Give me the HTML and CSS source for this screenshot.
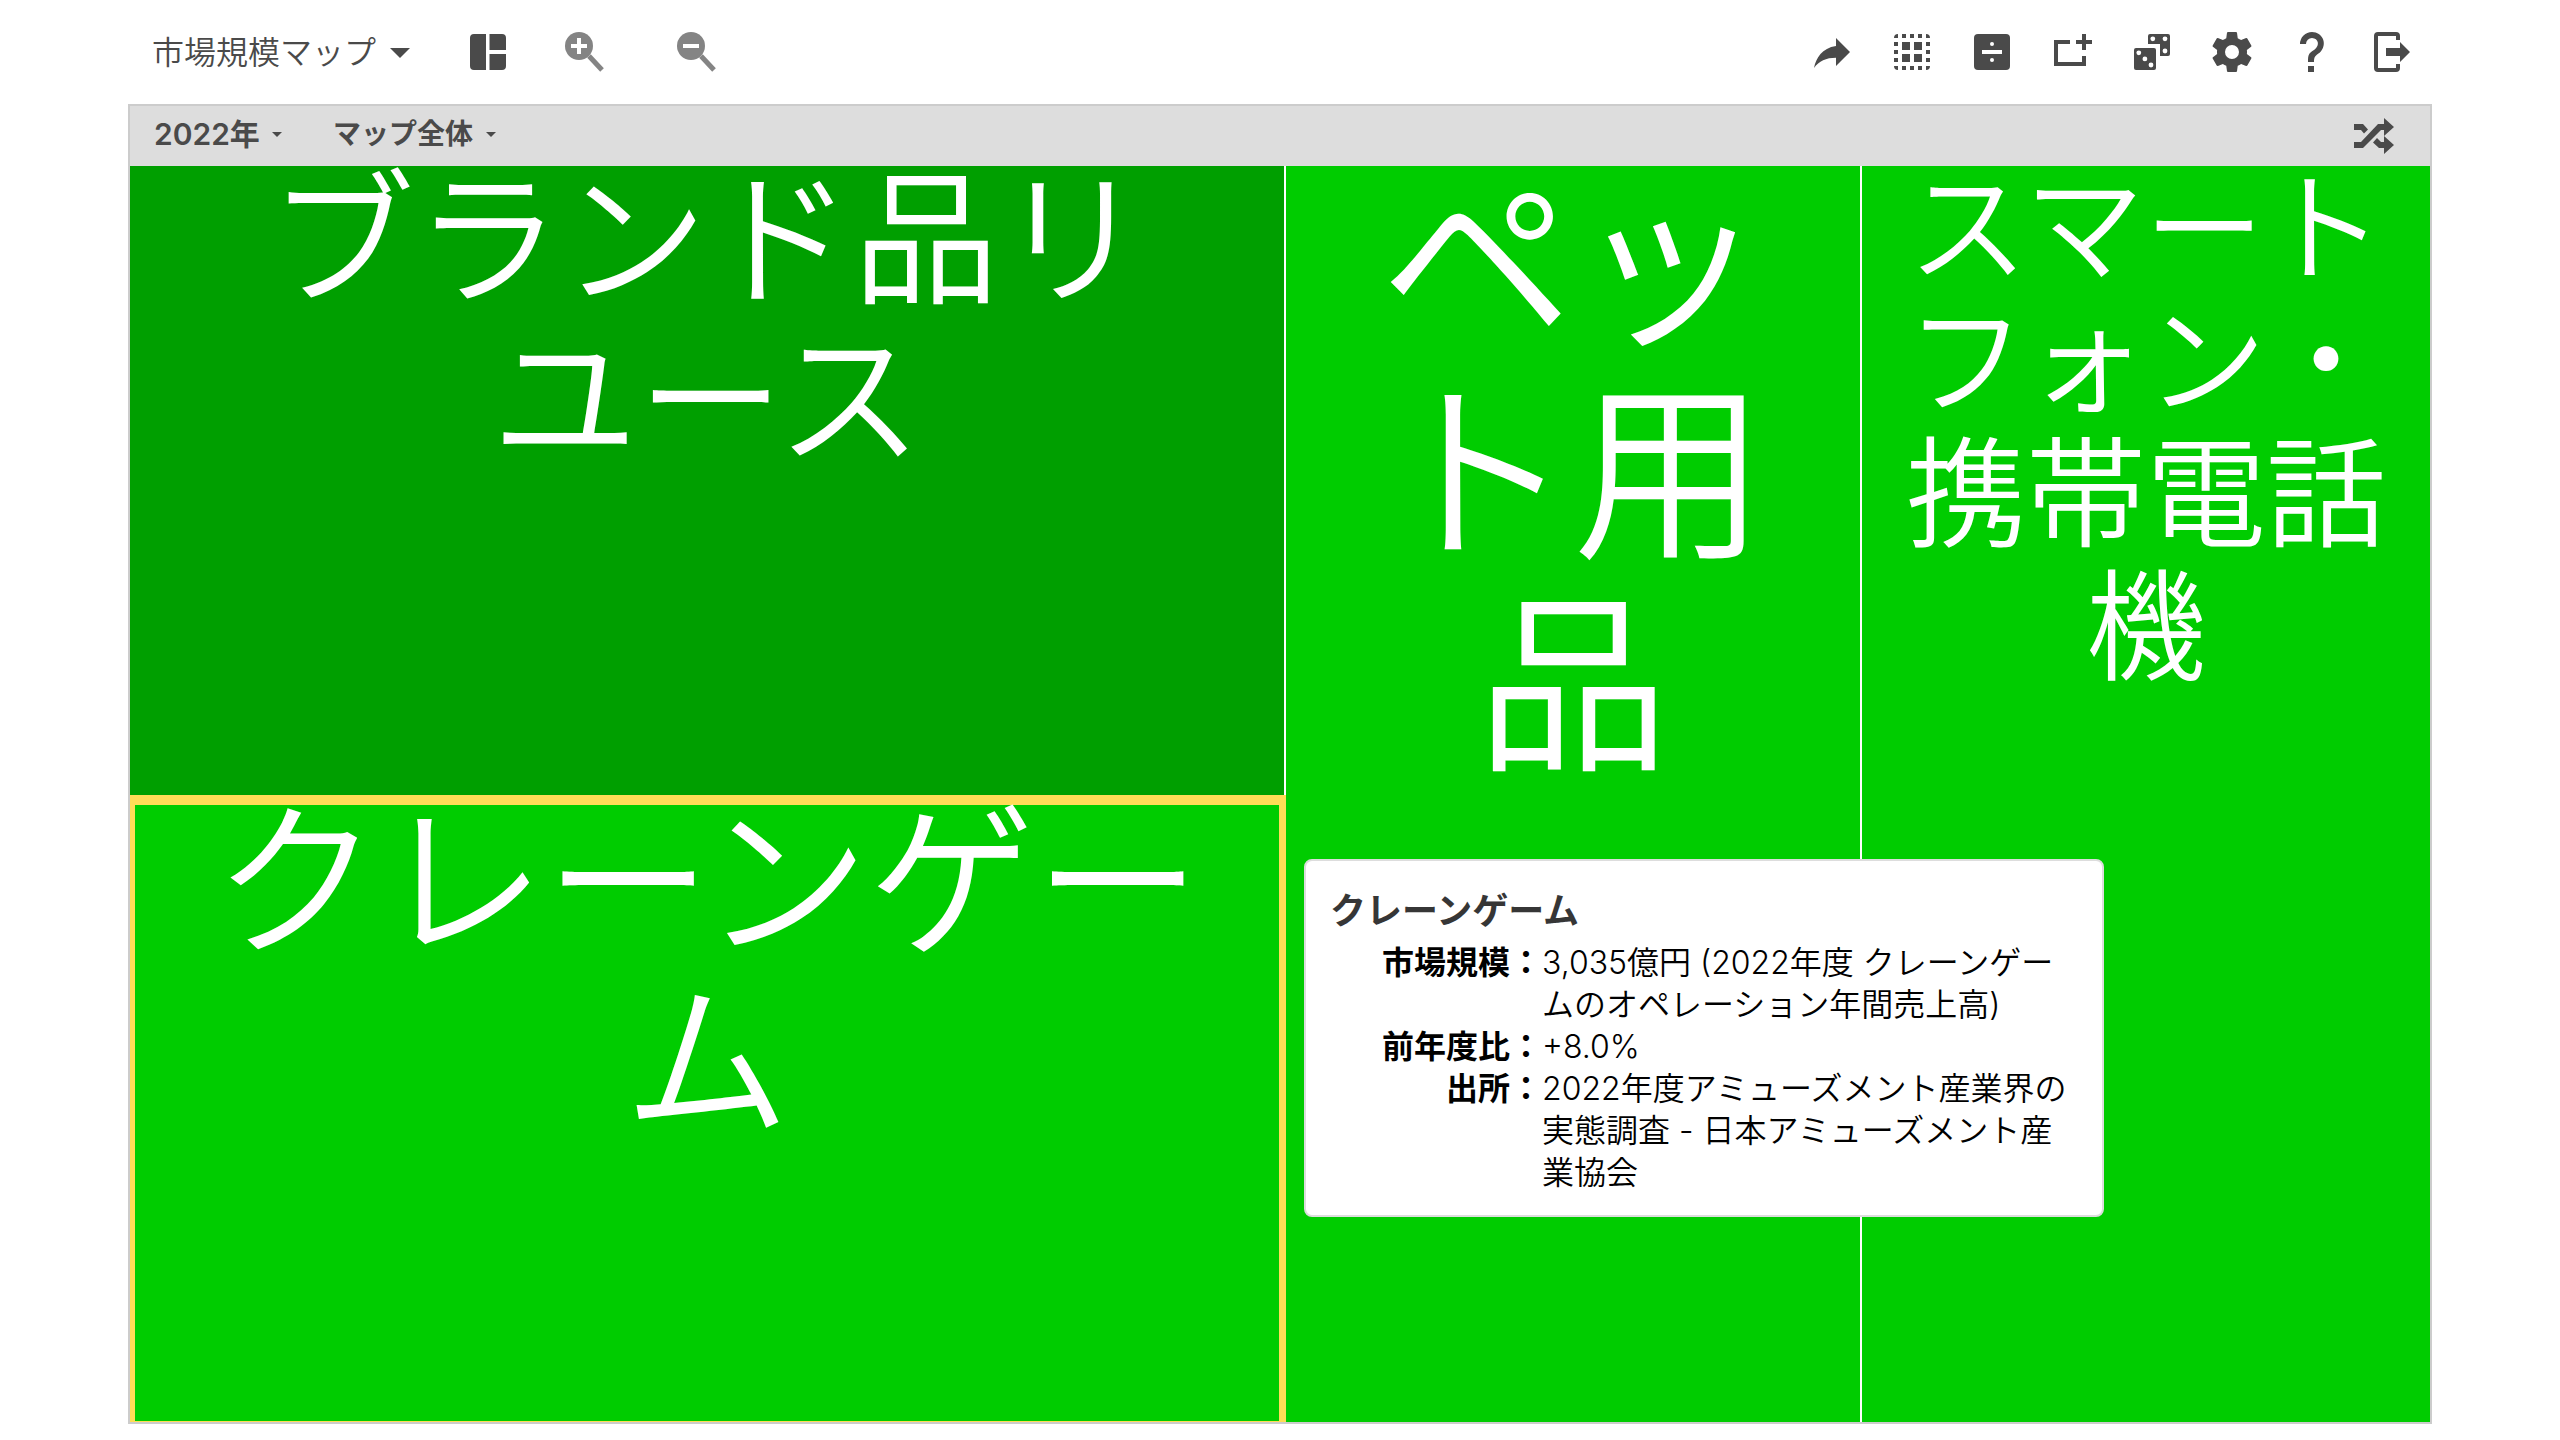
FILE: index.html
```html
<!DOCTYPE html>
<html lang="ja">
<head>
<meta charset="utf-8">
<title>市場規模マップ</title>
<link rel="stylesheet" href="styles.css">
</head>
<body>
<header class="toolbar">
  <div class="picker picker-title">
    <select aria-label="マップの種類"><option>市場規模マップ</option></select>
    <svg class="caret-large" viewBox="0 0 20 10"><path d="M0 0H20L10 10Z"/></svg>
  </div>
  <div class="view-tools">
    <button class="icon-button" type="button" aria-label="レイアウト"><svg viewBox="0 0 24 24"><path d="M5 3H11V21H5A2 2 0 0 1 3 19V5A2 2 0 0 1 5 3M12.750 3H19A2 2 0 0 1 21 5V11H12.750ZM12.750 13H21V19A2 2 0 0 1 19 21H12.750Z"/></svg></button>
    <button class="icon-button zoom" type="button" aria-label="拡大"><svg viewBox="0 0 48 48"><circle cx="20" cy="18" r="14"/><path class="handle" d="M30 28L43 42"/><path class="sign" d="M12 18H28M20 10V26"/></svg></button>
    <button class="icon-button zoom" type="button" aria-label="縮小"><svg viewBox="0 0 48 48"><circle cx="20" cy="18" r="14"/><path class="handle" d="M30 28L43 42"/><path class="sign" d="M12 18H28"/></svg></button>
  </div>
  <div class="actions">
    <button class="icon-button" type="button" aria-label="共有"><svg viewBox="0 0 24 24"><path d="M21 12L14 5V9C7 10 4 15 3 20C5.500 16.500 9 14.900 14 14.900V19Z"/></svg></button>
    <button class="icon-button" type="button" aria-label="すべて選択"><svg viewBox="0 0 24 24"><path d="M5 3V5H3A2 2 0 0 1 5 3M7 3H9V5H7ZM11 3H13V5H11ZM15 3H17V5H15ZM19 3A2 2 0 0 1 21 5H19ZM3 7H5V9H3ZM3 11H5V13H3ZM3 15H5V17H3ZM19 7H21V9H19ZM19 11H21V13H19ZM19 15H21V17H19ZM3 19H5V21A2 2 0 0 1 3 19M7 19H9V21H7ZM11 19H13V21H11ZM15 19H17V21H15ZM19 19H21A2 2 0 0 1 19 21ZM7 7H11V11H7ZM13 7H17V11H13ZM7 13H11V17H7ZM13 13H17V17H13Z"/></svg></button>
    <button class="icon-button" type="button" aria-label="割り算"><svg viewBox="0 0 24 24"><rect x="3" y="3" width="18" height="18" rx="2"/><path class="cut" d="M7 11H17V13H7Z"/><circle class="cut" cx="12" cy="8" r="1"/><circle class="cut" cx="12" cy="16" r="1"/></svg></button>
    <button class="icon-button" type="button" aria-label="追加"><svg viewBox="0 0 24 24"><path d="M3 6H11V8H5V17H17V14H19V19H3ZM17 3H19V6H22V8H19V11H17V8H14V6H17Z"/></svg></button>
    <button class="icon-button" type="button" aria-label="ランダム"><svg viewBox="0 0 24 24"><rect x="3" y="10" width="11" height="11" rx="1"/><path d="M11 3H20A1 1 0 0 1 21 4V13A1 1 0 0 1 20 14H16V8H10V4A1 1 0 0 1 11 3"/><g class="cut"><circle cx="12.400" cy="5.400" r="1.200"/><circle cx="18.500" cy="5.400" r="1.200"/><circle cx="18.500" cy="11.500" r="1.200"/><circle cx="5.400" cy="12.400" r="1.200"/><circle cx="8.450" cy="15.450" r="1.200"/><circle cx="11.500" cy="18.500" r="1.200"/></g></svg></button>
    <button class="icon-button" type="button" aria-label="設定"><svg viewBox="0 0 24 24"><path d="M12,15.5A3.5,3.5 0 0,1 8.5,12A3.5,3.5 0 0,1 12,8.5A3.5,3.5 0 0,1 15.5,12A3.5,3.5 0 0,1 12,15.5M19.43,12.97C19.47,12.65 19.5,12.33 19.5,12C19.5,11.67 19.47,11.34 19.43,11L21.54,9.37C21.73,9.22 21.78,8.95 21.66,8.73L19.66,5.27C19.54,5.05 19.27,4.96 19.05,5.05L16.56,6.05C16.04,5.66 15.5,5.32 14.87,5.07L14.5,2.42C14.46,2.18 14.25,2 14,2H10C9.75,2 9.54,2.18 9.5,2.42L9.13,5.07C8.5,5.32 7.96,5.66 7.44,6.05L4.95,5.05C4.73,4.96 4.46,5.05 4.34,5.27L2.34,8.73C2.21,8.95 2.27,9.22 2.46,9.37L4.57,11C4.53,11.34 4.5,11.67 4.5,12C4.5,12.33 4.53,12.65 4.57,12.97L2.46,14.63C2.27,14.78 2.21,15.05 2.34,15.27L4.34,18.73C4.46,18.95 4.73,19.03 4.95,18.95L7.44,17.94C7.96,18.34 8.5,18.68 9.13,18.93L9.5,21.58C9.54,21.82 9.75,22 10,22H14C14.25,22 14.46,21.82 14.5,21.58L14.87,18.93C15.5,18.67 16.04,18.34 16.56,17.94L19.05,18.95C19.27,19.03 19.54,18.95 19.66,18.73L21.66,15.27C21.78,15.05 21.73,14.78 21.54,14.63L19.43,12.97Z"/></svg></button>
    <button class="icon-button" type="button" aria-label="ヘルプ"><svg viewBox="0 0 24 24"><path d="M10,19H13V22H10V19M12,2C17.35,2.22 19.68,7.62 16.5,11.67C15.67,12.67 14.33,13.33 13.67,14.17C13,15 13,16 13,17H10C10,15.33 10,13.92 10.67,12.92C11.33,11.92 12.67,11.33 13.5,10.67C15.92,8.43 15.32,5.26 12,5A3,3 0 0,0 9,8H6A6,6 0 0,1 12,2Z"/></svg></button>
    <button class="icon-button" type="button" aria-label="終了"><svg viewBox="0 0 24 24"><path d="M5 2H14A2 2 0 0 1 16 4V6H14V4H5V20H14V18H16V20A2 2 0 0 1 14 22H5A2 2 0 0 1 3 20V4A2 2 0 0 1 5 2M9 10H16V7L21 12L16 17V14H9Z"/></svg></button>
  </div>
</header>
<main class="frame">
  <div class="filters">
    <div class="picker picker-year">
      <select aria-label="年"><option>2022年</option></select>
      <svg class="caret-small" viewBox="0 0 10 5"><path d="M0 0H10L5 5Z"/></svg>
    </div>
    <div class="picker">
      <select aria-label="表示範囲"><option>マップ全体</option></select>
      <svg class="caret-small" viewBox="0 0 10 5"><path d="M0 0H10L5 5Z"/></svg>
    </div>
    <button class="shuffle" type="button" aria-label="シャッフル"><svg viewBox="0 0 40 36"><path d="M0 6H9L14 11.500L10 15.500L7 12H0ZM0 24H7L24 6H30V0L40 9L30 18V12H27L9 30H0ZM19 24.500L23 20L27 24H30V18L40 27L30 36V30H25Z"/></svg></button>
  </div>
  <div class="map">
    <div class="column">
      <a class="tile tile-brand" href="#brand"><span>ブランド品リ<br>ユース</span></a>
      <a class="tile tile-crane" href="#crane"><span>クレーンゲー<br>ム</span></a>
    </div>
    <a class="tile tile-pet" href="#pet"><span>ペッ<br>ト用<br>品</span></a>
    <a class="tile tile-phone" href="#phone"><span>スマート<br>フォン・<br>携帯電話<br>機</span></a>
    <div class="tooltip" role="tooltip">
      <h2>クレーンゲーム</h2>
      <dl>
        <dt>市場規模：</dt><dd>3,035億円 (2022年度 クレーンゲームのオペレーション年間売上高)</dd>
        <dt>前年度比：</dt><dd>+8.0%</dd>
        <dt>出所：</dt><dd>2022年度アミューズメント産業界の実態調査 - 日本アミューズメント産業協会</dd>
      </dl>
    </div>
  </div>
</main>
</body>
</html>
```
FILE: styles.css
```css
* { box-sizing: border-box; }

body {
  margin: 0;
  min-height: 100vh;
  padding: 0 5% 16px;
  display: flex;
  flex-direction: column;
  background: #fff;
  color: #000;
  font-family: Inter, "Noto Sans CJK JP", sans-serif;
}

button, select {
  margin: 0;
  padding: 0;
  border: 0;
  background: none;
  color: inherit;
  font: inherit;
  appearance: none;
}

svg { display: block; fill: currentColor; }

.toolbar {
  height: 104px;
  padding: 0 16px 0 24px;
  display: flex;
  align-items: center;
  color: #4a4a4a;
}

.picker { display: flex; align-items: center; }
.picker-title { gap: 13px; padding-top: 2px; font-size: 32px; font-weight: 350; line-height: 48px; }
.caret-large { width: 20px; height: 10px; }
.caret-small { width: 10px; height: 5px; }

.view-tools { display: flex; gap: 64px; margin-left: 54px; }
.view-tools .icon-button:first-child { margin-right: -17px; }
.actions { display: flex; gap: 32px; margin-left: auto; }
.icon-button { width: 48px; height: 48px; }
.icon-button svg { width: 48px; height: 48px; }
.cut { fill: #fff; }
.zoom { color: #848484; }
.handle { stroke: currentColor; stroke-width: 5; }
.sign { stroke: #fff; stroke-width: 4; }

.frame {
  flex: 1;
  display: flex;
  flex-direction: column;
  border: 2px solid #ccc;
}

.filters {
  height: 60px;
  padding: 0 36px 0 24px;
  display: flex;
  align-items: center;
  gap: 51px;
  background: #ddd;
  color: #4a4a4a;
  font-size: 28px;
  font-weight: 600;
  line-height: 40px;
}
.filters .picker { gap: 12px; padding-bottom: 4px; }
.filters .picker-year { font-size: 30px; }
.shuffle { margin-left: auto; }
.shuffle svg { width: 40px; height: 36px; }

.map {
  flex: 1;
  position: relative;
  display: grid;
  grid-template-columns: 1156fr 576fr 568fr;
}
.column { display: grid; grid-template-rows: 629fr 627fr; }

.tile {
  min-width: 0;
  display: flex;
  flex-direction: column;
  background: #00cc00;
  color: #fff;
  text-align: center;
  text-decoration: none;
  white-space: nowrap;
  font-weight: 350;
}
.tile-brand { background: #009f00; border-right: 2px solid #fff; font-size: 146px; line-height: 160px; }
.tile-brand span { margin-top: -7px; }
.tile-crane { border: solid #ffdd57; border-width: 10px 7px 1px 5px; font-size: 166px; line-height: 180px; }
.tile-crane span { margin-top: -13px; }
.tile-pet { border-right: 2px solid #fff; font-size: 193px; line-height: 212px; }
.tile-pet span { margin-top: -10px; }
.tile-phone { font-size: 120px; line-height: 133px; }
.tile-phone span { margin-top: -4px; }

.tooltip {
  position: absolute;
  top: 693px;
  left: 1174px;
  width: 800px;
  padding: 26px 24px 21px;
  border: 2px solid #ddd;
  border-radius: 8px;
  background: #fff;
}
.tooltip h2 { margin: 0 0 7px; color: #363636; font-size: 36px; font-weight: 600; line-height: 48px; }
.tooltip dl {
  margin: 0;
  display: grid;
  grid-template-columns: 212px 1fr;
  font-size: 32px;
  line-height: 42px;
}
.tooltip dt { text-align: right; font-weight: 700; }
.tooltip dd { margin: 0; font-weight: 350; }
```
